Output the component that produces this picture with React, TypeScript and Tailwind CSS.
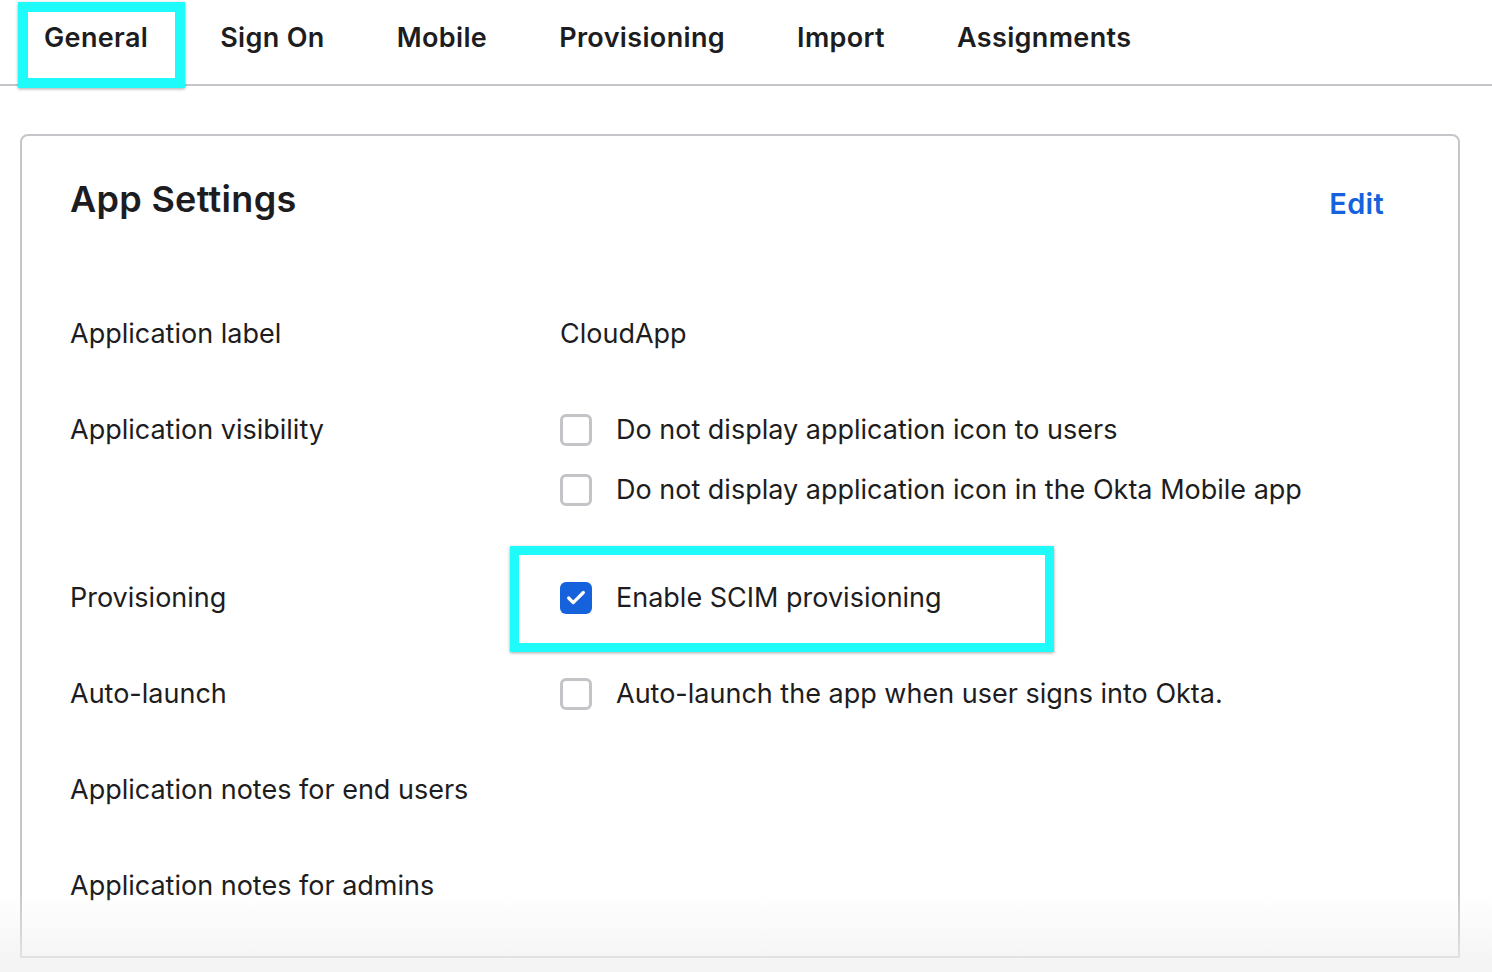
import { Check } from "lucide-react";

const tabs = ["General", "Sign On", "Mobile", "Provisioning", "Import", "Assignments"];

function Box({ checked = false }: { checked?: boolean }) {
  return checked ? (
    <span className="flex h-[32px] w-[32px] shrink-0 items-center justify-center rounded-[6px] bg-[#1662dd]">
      <Check className="h-[22px] w-[22px] text-white" strokeWidth={3.5} />
    </span>
  ) : (
    <span className="h-[32px] w-[32px] shrink-0 rounded-[6px] border-[3px] border-[#c4c4c8] bg-white" />
  );
}

function Option({ checked, label }: { checked?: boolean; label: string }) {
  return (
    <div className="flex h-[36px] items-center gap-[24px]">
      <Box checked={checked} />
      <span>{label}</span>
    </div>
  );
}

export default function App() {
  return (
    <div
      className="relative h-[972px] w-[1492px] overflow-hidden bg-white text-[#1d1d21]"
      style={{ fontFamily: "Inter, 'Noto Sans', sans-serif" }}
    >
      {/* tabs */}
      <div className="flex h-[86px] border-b-2 border-[#c6c6ca] pl-[8px]">
        {tabs.map((t, i) => (
          <div
            key={t}
            className="relative flex h-full items-start px-[36px] pt-[20px] text-[27px] font-semibold leading-[36px] tracking-[0.35px]"
          >
            {i === 0 && (
              <span className="pointer-events-none absolute left-[10px] right-[-1px] top-[2px] bottom-[-4px] border-[10px] border-[#1ffbfb] bg-white shadow-[0_1px_3px_rgba(0,0,0,0.35)]" />
            )}
            <span className="relative">{t}</span>
          </div>
        ))}
      </div>

      {/* card */}
      <div className="mx-[20px] mt-[48px] h-[824px] w-[1440px] rounded-t-[8px] border-2 border-[#c6c6ca] pl-[48px] pr-[74px] pt-[40px] text-[27px] leading-[36px]">
        <div className="flex items-center justify-between">
          <h1 className="text-[36px] font-semibold leading-[42px] tracking-[0.3px]">App Settings</h1>
          <a className="mt-[10px] text-[29px] font-semibold tracking-[0.3px] text-[#1662dd]">Edit</a>
        </div>

        <div className="mt-[94px] flex flex-col">
          <div className="flex">
            <div className="w-[490px]">Application label</div>
            <div>CloudApp</div>
          </div>

          <div className="mt-[60px] flex">
            <div className="w-[490px]">Application visibility</div>
            <div className="flex flex-col gap-[24px]">
              <Option label="Do not display application icon to users" />
              <Option label="Do not display application icon in the Okta Mobile app" />
            </div>
          </div>

          <div className="mt-[72px] flex">
            <div className="w-[490px]">Provisioning</div>
            <div className="relative">
              <span className="pointer-events-none absolute left-[-50px] top-[-34px] h-[106px] w-[544px] border-[9px] border-[#1ffbfb] shadow-[0_1px_3px_rgba(0,0,0,0.35)]" />
              <Option checked label="Enable SCIM provisioning" />
            </div>
          </div>

          <div className="mt-[60px] flex">
            <div className="w-[490px]">Auto-launch</div>
            <Option label="Auto-launch the app when user signs into Okta." />
          </div>

          <div className="mt-[60px] flex">
            <div className="w-[490px]">Application notes for end users</div>
          </div>

          <div className="mt-[60px] flex">
            <div className="w-[490px]">Application notes for admins</div>
          </div>
        </div>
      </div>
      <div className="pointer-events-none absolute inset-x-0 bottom-0 h-[80px] bg-gradient-to-b from-transparent to-[#f0f0f1]/80" />
    </div>
  );
}
